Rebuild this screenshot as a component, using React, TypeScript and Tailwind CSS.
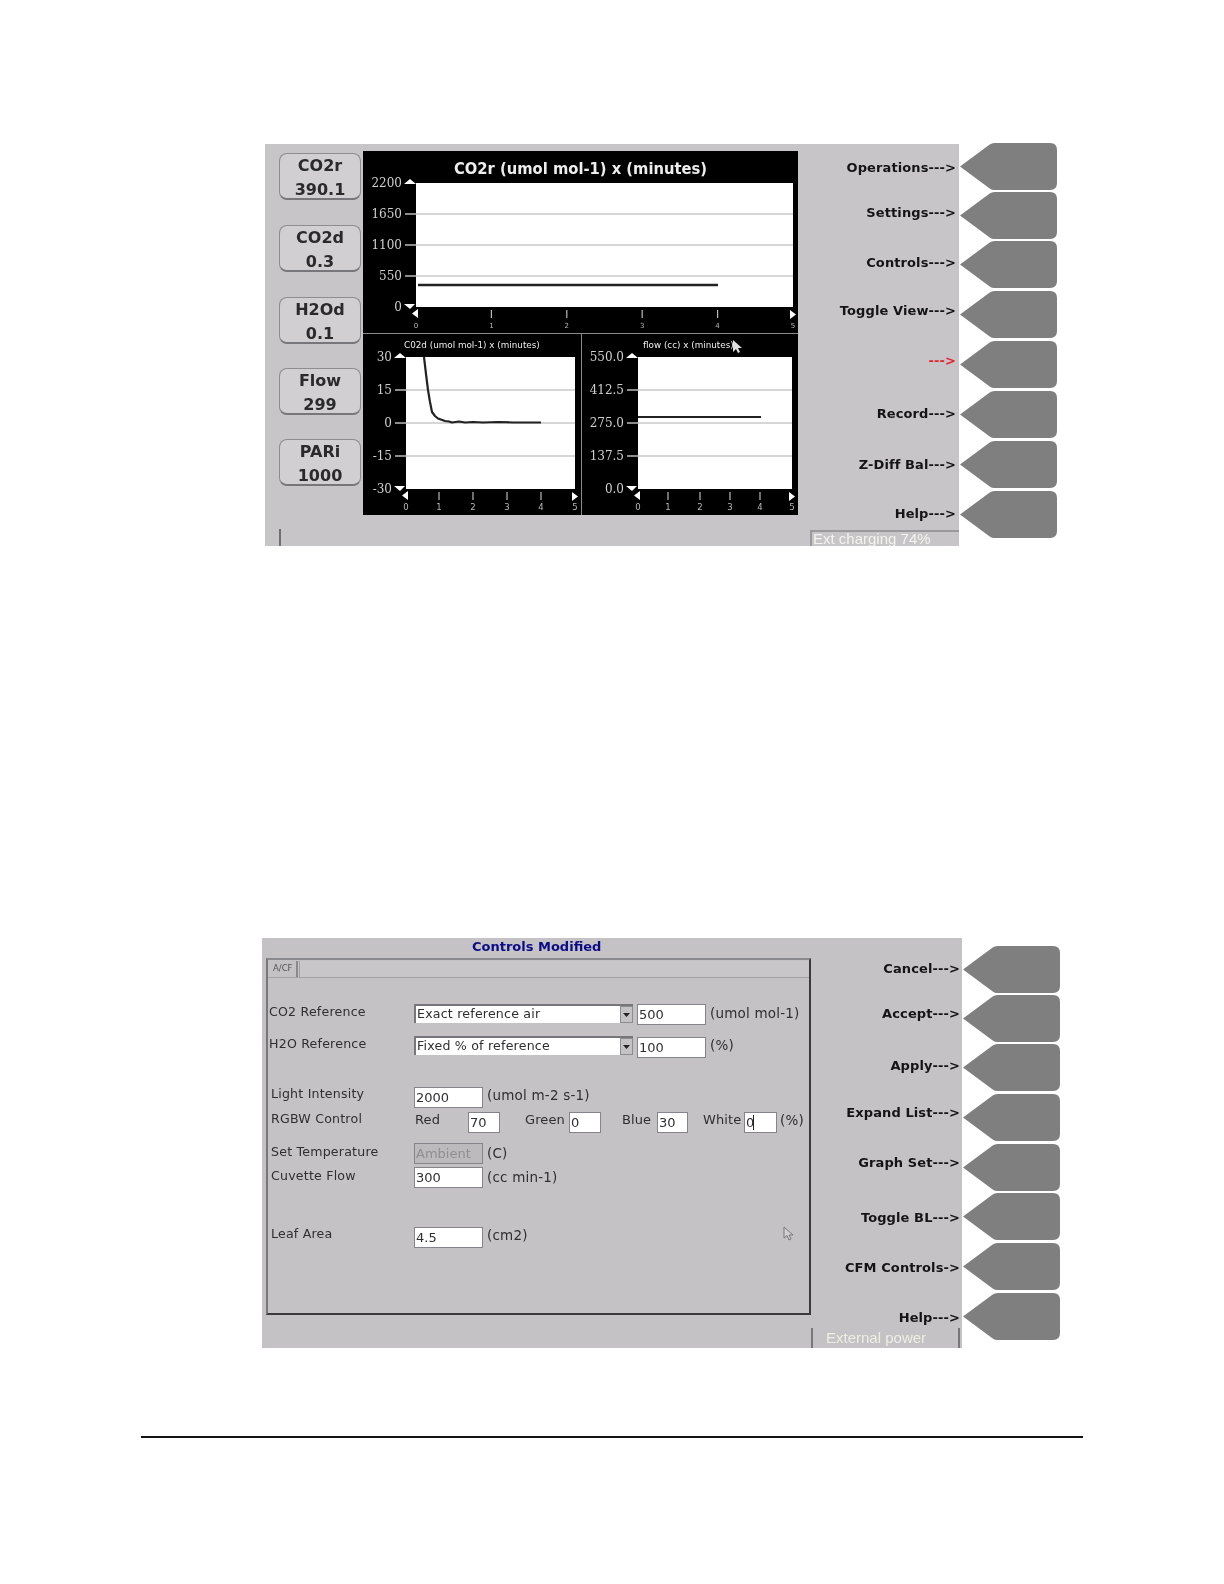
import React from "react";

const sans = "font-['DejaVu_Sans',sans-serif]";

function Arrow({ className }: { className?: string }) {
  return (
    <svg width="97" height="47" viewBox="0 0 98 47" preserveAspectRatio="none" className={`block shrink-0 ${className ?? ""}`}>
      <path d="M0 23.5 L30 1.5 Q32 0 35 0 H91 Q98 0 98 7 V40 Q98 47 91 47 H35 Q32 47 30 45.5 Z" fill="#7f7f7f" />
    </svg>
  );
}

function ArrowColumn({ margins, className }: { margins: string[]; className: string }) {
  return (
    <div className={`flex flex-col w-[97px] shrink-0 ${className}`}>
      {margins.map((m, i) => (
        <Arrow key={i} className={m} />
      ))}
    </div>
  );
}

function ReadoutButton({ name, value, className }: { name: string; value: string; className?: string }) {
  return (
    <div
      className={`w-[82px] h-[47px] pt-[3px] rounded-[8px] border border-[#8d8c8f] border-b-2 border-b-[#77767a] bg-[#d1cfd2] flex flex-col items-center justify-center text-[16px] leading-[24px] font-bold text-[#2a2a2c] ${sans} ${className ?? ""}`}
    >
      <span>{name}</span>
      <span>{value}</span>
    </div>
  );
}

type ChartProps = {
  w: number;
  h: number;
  plot: [number, number, number, number];
  ylabels: string[];
  xs: number[];
  xLabelSize: number;
  title: string;
  titleX: number;
  titleY: number;
  titleSize: number;
  titleBold?: boolean;
  titleLength?: number;
  yLabelX: number;
  yLabelSize: number;
  children?: React.ReactNode;
};

function Chart({ w, h, plot, ylabels, xs, xLabelSize, title, titleX, titleY, titleSize, titleBold, titleLength, yLabelX, yLabelSize, children }: ChartProps) {
  const [x0, y0, x1, y1] = plot;
  const n = ylabels.length - 1;
  return (
    <svg width={w} height={h} viewBox={`0 0 ${w} ${h}`} className="block shrink-0">
      <rect width={w} height={h} fill="#000" />
      <rect x={x0} y={y0} width={x1 - x0} height={y1 - y0} fill="#fff" />
      <text
        x={titleX}
        y={titleY}
        fill="#eee"
        fontSize={titleSize}
        fontWeight={titleBold ? 700 : 400}
        fontFamily="'DejaVu Sans',sans-serif"
        textLength={titleLength}
        lengthAdjust={titleLength ? "spacingAndGlyphs" : undefined}
      >
        {title}
      </text>
      {ylabels.map((l, i) => {
        const y = y0 + ((y1 - y0) * i) / n;
        return (
          <g key={l}>
            {i > 0 && i < n && <line x1={x0} x2={x1} y1={y} y2={y} stroke="#c9c9c9" strokeWidth="1.5" />}
            {i > 0 && i < n && <line x1={x0 - 11} x2={x0} y1={y} y2={y} stroke="#bbb" strokeWidth="1.5" />}
            <text x={yLabelX} y={y + yLabelSize * 0.36} textAnchor="end" fill="#cfcfcf" fontSize={yLabelSize} fontFamily="'DejaVu Serif',serif">
              {l}
            </text>
          </g>
        );
      })}
      <path d={`M${x0 - 12} ${y0 + 1} l6 -5 l6 5 Z`} fill="#fff" />
      <path d={`M${x0 - 12} ${y1 - 3} h11 l-5 5 Z`} fill="#fff" />
      <path d={`M${x0 + 2} ${y1 + 2} v9 l-6 -4.5 Z`} fill="#fff" />
      <path d={`M${x1 - 3} ${y1 + 3} v9 l6 -4.5 Z`} fill="#fff" />
      {xs.map((x, i) => (
        <g key={i}>
          {i > 0 && i < xs.length - 1 && <line x1={x} x2={x} y1={y1 + 3} y2={y1 + 11} stroke="#bbb" strokeWidth="1.2" />}
          <text x={x} y={y1 + 21} textAnchor="middle" fill="#b8b8b8" fontSize={xLabelSize} fontFamily="'DejaVu Sans',sans-serif">
            {i}
          </text>
        </g>
      ))}
      {children}
    </svg>
  );
}

function Screen1Panel() {
  return (
    <div className="w-[435px] h-[364px] bg-black flex flex-col mt-[7px] ml-[2px] shrink-0">
      <Chart
        w={435}
        h={182}
        plot={[53, 32, 430, 156]}
        ylabels={["2200", "1650", "1100", "550", "0"]}
        xs={[53, 128.4, 203.8, 279.2, 354.6, 430]}
        xLabelSize={7}
        title="CO2r (umol mol-1) x (minutes)"
        titleX={91}
        titleY={23}
        titleSize={16.5}
        titleBold
        titleLength={253}
        yLabelX={39}
        yLabelSize={12}
      >
        <line x1={55} x2={355} y1={134} y2={134} stroke="#222" strokeWidth="2.6" />
      </Chart>
      <div className="h-px bg-[#8a8a8a]" />
      <div className="flex">
        <Chart
          w={218}
          h={181}
          plot={[43, 23, 212, 155]}
          ylabels={["30", "15", "0", "-15", "-30"]}
          xs={[43, 76, 110, 144, 178, 212]}
          xLabelSize={8.5}
          title="C02d (umol mol-1) x (minutes)"
          titleX={41}
          titleY={14}
          titleSize={8.8}
          yLabelX={29}
          yLabelSize={12}
        >
          <path
            d="M61 23 L63 40 L65 56 L67 68 L69 78 L72 82 L75 84.5 L82 87 L86 87.5 L89 88.5 L96 87.5 L102 88.5 L110 88 L120 88.5 L135 88 L150 88.5 L178 88.5"
            fill="none"
            stroke="#222"
            strokeWidth="2.2"
            strokeLinejoin="round"
          />
        </Chart>
        <div className="w-px bg-[#8a8a8a]" />
        <Chart
          w={216}
          h={181}
          plot={[56, 23, 210, 155]}
          ylabels={["550.0", "412.5", "275.0", "137.5", "0.0"]}
          xs={[56, 86, 118, 148, 178, 210]}
          xLabelSize={8.5}
          title="flow (cc) x (minutes)"
          titleX={61}
          titleY={14}
          titleSize={8.8}
          yLabelX={42}
          yLabelSize={12}
        >
          <line x1={56} x2={179} y1={83} y2={83} stroke="#222" strokeWidth="2" />
          <path d="M151 6 L151 18 L154 15 L156 19 L158 18 L156 14 L160 14 Z" fill="#ddd" />
        </Chart>
      </div>
    </div>
  );
}

function MenuLabel({ text, h, red, pr }: { text: string; h: string; red?: boolean; pr: string }) {
  return (
    <div className={`flex items-center justify-end ${pr} text-[13px] font-bold tracking-[0.1px] whitespace-nowrap ${h} ${red ? "text-[#e8202a]" : "text-[#141416]"} ${sans}`}>
      {text}
    </div>
  );
}

function Screen1() {
  return (
    <div className="flex ml-[265px] pt-[143px] items-start blur-[0.5px]">
      <div className="mt-px w-[694px] h-[402px] bg-[#c7c5c8] flex flex-col">
        <div className="flex h-[385px]">
          <div className="pl-[14px] pt-[9px] flex flex-col">
            <ReadoutButton name="CO2r" value="390.1" />
            <ReadoutButton name="CO2d" value="0.3" className="mt-[25px]" />
            <ReadoutButton name="H2Od" value="0.1" className="mt-[25px]" />
            <ReadoutButton name="Flow" value="299" className="mt-[24px]" />
            <ReadoutButton name="PARi" value="1000" className="mt-[24px]" />
          </div>
          <Screen1Panel />
          <div className="flex-1 pt-[13px] min-w-0">
            <MenuLabel pr="pr-[3px]" text="Operations--->" h="h-[22px]" />
            <MenuLabel pr="pr-[3px]" text="Settings--->" h="h-[45px] pt-[23px]" />
            <MenuLabel pr="pr-[3px]" text="Controls--->" h="h-[50px] pt-[28px]" />
            <MenuLabel pr="pr-[3px]" text="Toggle View--->" h="h-[48px] pt-[26px]" />
            <MenuLabel pr="pr-[3px]" text="--->" h="h-[50px] pt-[28px]" red />
            <MenuLabel pr="pr-[3px]" text="Record--->" h="h-[53px] pt-[31px]" />
            <MenuLabel pr="pr-[3px]" text="Z-Diff Bal--->" h="h-[51px] pt-[29px]" />
            <MenuLabel pr="pr-[3px]" text="Help--->" h="h-[49px] pt-[27px]" />
          </div>
        </div>
        <div className="flex-1 flex items-stretch justify-between pl-[14px]">
          <div className="w-[2px] bg-[#6f6e71]" />
          <div className="w-[149px] mt-[1px] border-t-2 border-l-2 border-[#9a999c] overflow-hidden pl-[1px] font-['Liberation_Sans',sans-serif] text-[15px] leading-[14px] text-[#f4f4ee] whitespace-nowrap">
            Ext charging 74%
          </div>
        </div>
      </div>
      <ArrowColumn
        className="ml-[1px]"
        margins={["", "mt-[2px]", "mt-[2px]", "mt-[3px]", "mt-[3px]", "mt-[3px]", "mt-[3px]", "mt-[3px]"]}
      />
    </div>
  );
}

const labelText = `text-[12.6px] text-[#2f2f32] whitespace-nowrap tracking-[0.2px] ${sans}`;
const midText = `text-[13px] text-[#2f2f32] whitespace-nowrap tracking-[0.1px] ${sans}`;
const unitText = `text-[13.5px] text-[#2f2f32] whitespace-nowrap tracking-[0.2px] ${sans}`;

function Field({ value, w, disabled, caret, mt }: { value: string; w: string; disabled?: boolean; caret?: boolean; mt: string }) {
  return (
    <div
      className={`h-[21px] ${w} ${mt} shrink-0 border-[1.5px] border-[#85848a] flex items-center pl-[1px] text-[13px] ${sans} ${disabled ? "bg-[#bcbabd] text-[#8f8e92]" : "bg-white text-[#2f2f32]"}`}
    >
      {value}
      {caret && <span className="w-px h-[15px] bg-[#222] -ml-[1px]" />}
    </div>
  );
}

function SelectField({ value }: { value: string }) {
  return (
    <div className={`h-[19px] w-[219px] mt-[2px] shrink-0 border-t-2 border-l-2 border-[#77767a] bg-white flex items-center text-[12.6px] text-[#2f2f32] ${sans}`}>
      <span className="flex-1 pl-[1px] tracking-[0.2px]">{value}</span>
      <span className="w-[13px] h-full bg-[#c4c2c5] border border-[#8d8c8f] flex items-center justify-center">
        <svg width="7" height="4" viewBox="0 0 7 4">
          <path d="M0 0 H7 L3.5 4 Z" fill="#222" />
        </svg>
      </span>
    </div>
  );
}

function FormRow({ label, mt, pl, children }: { label: string; mt: string; pl: string; children: React.ReactNode }) {
  return (
    <div className={`flex items-center h-[22px] ${mt}`}>
      <div className={`w-[146px] shrink-0 ${pl} ${labelText}`}>{label}</div>
      {children}
    </div>
  );
}

function Unit({ text, ml }: { text: string; ml: string }) {
  return <span className={`${ml} ${unitText}`}>{text}</span>;
}

function Screen2Form() {
  return (
    <div className="ml-[4px] w-[545px] h-[357px] border-2 border-t-[#8a898d] border-l-[#77767a] border-r-[#3a3a3d] border-b-[#3a3a3d] flex flex-col">
      <div className="flex h-[17px] border-b border-[#a3a2a6] mt-px">
        <div className={`w-[30px] h-full border-r-2 border-[#8a898d] pl-[5px] text-[8.5px] leading-[14px] text-[#555] ${sans}`}>A/CF</div>
        <div className="flex-1 ml-[1px] border-l border-[#a3a2a6] bg-[#c8c6c9]" />
      </div>
      <FormRow label="CO2 Reference" mt="mt-[24px]" pl="pl-[1px]">
        <SelectField value="Exact reference air" />
        <div className="ml-[4px]"><Field value="500" w="w-[69px]" mt="mt-[4px]" /></div>
        <Unit text="(umol mol-1)" ml="ml-[4px]" />
      </FormRow>
      <FormRow label="H2O Reference" mt="mt-[10px]" pl="pl-[1px]">
        <SelectField value="Fixed % of reference" />
        <div className="ml-[4px]"><Field value="100" w="w-[69px]" mt="mt-[6px]" /></div>
        <Unit text="(%)" ml="ml-[4px]" />
      </FormRow>
      <FormRow label="Light Intensity" mt="mt-[28px]" pl="pl-[3px]">
        <Field value="2000" w="w-[69px]" mt="mt-[6px]" />
        <Unit text="(umol m-2 s-1)" ml="ml-[4px]" />
      </FormRow>
      <FormRow label="RGBW Control" mt="mt-[3px]" pl="pl-[3px]">
        <span className={`w-[54px] pl-[1px] ${midText}`}>Red</span>
        <Field value="70" w="w-[32px]" mt="mt-[6px]" />
        <span className={`w-[69px] pl-[25px] ${midText}`}>Green</span>
        <Field value="0" w="w-[32px]" mt="mt-[6px]" />
        <span className={`w-[56px] pl-[21px] ${midText}`}>Blue</span>
        <Field value="30" w="w-[31px]" mt="mt-[6px]" />
        <span className={`w-[56px] pl-[15px] ${midText}`}>White</span>
        <Field value="0" w="w-[33px]" mt="mt-[6px]" caret />
        <Unit text="(%)" ml="ml-[3px]" />
      </FormRow>
      <FormRow label="Set Temperature" mt="mt-[11px]" pl="pl-[3px]">
        <Field value="Ambient" w="w-[69px]" mt="mt-[2px]" disabled />
        <Unit text="(C)" ml="ml-[4px]" />
      </FormRow>
      <FormRow label="Cuvette Flow" mt="mt-[2px]" pl="pl-[3px]">
        <Field value="300" w="w-[69px]" mt="mt-[2px]" />
        <Unit text="(cc min-1)" ml="ml-[4px]" />
      </FormRow>
      <FormRow label="Leaf Area" mt="mt-[36px]" pl="pl-[3px]">
        <Field value="4.5" w="w-[69px]" mt="mt-[6px]" />
        <Unit text="(cm2)" ml="ml-[4px]" />
      </FormRow>
      <div className="flex justify-end pr-[14px] -mt-[20px]">
        <svg width="12" height="15" viewBox="0 0 12 15">
          <path d="M1 1 V12 L4 9.5 L6 14 L8 13 L6 9 L10 9 Z" fill="#d2d0d3" stroke="#77767a" strokeWidth="1" />
        </svg>
      </div>
    </div>
  );
}

function Screen2() {
  return (
    <div className="flex ml-[262px] mt-[392px] items-start blur-[0.5px]">
      <div className="w-[700px] h-[410px] bg-[#c4c2c5] flex flex-col">
        <div className={`h-[20px] pl-[210px] text-[13px] leading-[18px] font-bold text-[#0b0b86] ${sans}`}>Controls Modified</div>
        <div className="flex h-[375px]">
          <Screen2Form />
          <div className="flex-1 pt-[1px] min-w-0">
            <MenuLabel pr="pr-[2px]" text="Cancel--->" h="h-[20px]" />
            <MenuLabel pr="pr-[2px]" text="Accept--->" h="h-[45px] pt-[25px]" />
            <MenuLabel pr="pr-[2px]" text="Apply--->" h="h-[52px] pt-[32px]" />
            <MenuLabel pr="pr-[2px]" text="Expand List--->" h="h-[47px] pt-[27px]" />
            <MenuLabel pr="pr-[2px]" text="Graph Set--->" h="h-[50px] pt-[30px]" />
            <MenuLabel pr="pr-[2px]" text="Toggle BL--->" h="h-[55px] pt-[35px]" />
            <MenuLabel pr="pr-[2px]" text="CFM Controls->" h="h-[50px] pt-[30px]" />
            <MenuLabel pr="pr-[2px]" text="Help--->" h="h-[50px] pt-[30px]" />
          </div>
        </div>
        <div className="flex-1 flex justify-end pr-[2px]">
          <div className="w-[149px] border-x-2 border-[#77767a] overflow-hidden pl-[13px] font-['Liberation_Sans',sans-serif] text-[15px] leading-[20px] text-[#eeeee2] whitespace-nowrap">
            External power
          </div>
        </div>
      </div>
      <ArrowColumn
        className="ml-[1px] mt-[8px]"
        margins={["", "mt-[2px]", "mt-[2px]", "mt-[3px]", "mt-[3px]", "mt-[2px]", "mt-[3px]", "mt-[3px]"]}
      />
    </div>
  );
}

export default function App() {
  return (
    <div className="w-[1224px] h-[1584px] bg-white overflow-hidden">
      <Screen1 />
      <Screen2 />
      <div className="ml-[141px] mt-[88px] w-[942px] h-[1.5px] bg-[#111]" />
    </div>
  );
}
